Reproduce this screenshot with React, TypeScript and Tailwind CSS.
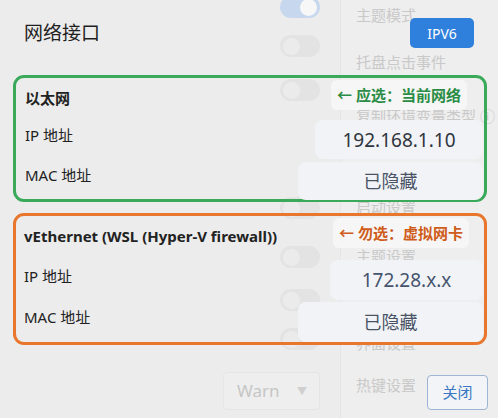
const Toggle = ({ on = false, className = "" }: { on?: boolean; className?: string }) => (
  <div
    className={`w-[40px] h-[22px] rounded-full flex items-center px-[3px] ${
      on ? "bg-[#c6d7ee] justify-end" : "bg-[#e3e3e3] justify-start"
    } ${className}`}
  >
    <div className={`w-[17px] h-[17px] rounded-full ${on ? "bg-[#f7f7f7]" : "bg-[#ebebeb]"}`} />
  </div>
);

const Pill = ({ children, className = "" }: { children: React.ReactNode; className?: string }) => (
  <div
    className={`bg-[#f1f3f6] rounded-[8px] flex items-center justify-center text-[18px] ${className}`}
  >
    {children}
  </div>
);

const Background = () => (
  <div className="flex h-full">
    <div className="w-[340px] flex flex-col items-end pr-[20px]">
      <Toggle on className="-mt-[4px]" />
      <Toggle className="mt-[17px]" />
      <Toggle className="mt-[22px]" />
      <Toggle className="mt-[96px]" />
      <Toggle className="mt-[27px]" />
      <Toggle className="mt-[21px]" />
      <Toggle className="mt-[17px]" />
      <div className="mt-[22px] w-[97px] h-[38px] border border-[#e5e5e5] rounded-[4px] bg-[#eeeeee] flex items-center justify-between pl-[13px] pr-[12px] text-[17px] text-[#c6c6c6]">
        <span>Warn</span>
        <span className="text-[10px] text-[#cfcfcf]">▼</span>
      </div>
    </div>
    <div className="flex-1 border-l border-[#e5e5e5] bg-[#eeeeee] pl-[15px] flex flex-col text-[15px] leading-[20px] text-[#c9c9c9]">
      <span className="mt-[5px]">主题模式</span>
      <span className="mt-[27px]">托盘点击事件</span>
      <span className="mt-[37px] leading-[14px] whitespace-nowrap">复制环境变量类型 ⓘ</span>
      <span className="mt-[74px]">启动设置</span>
      <span className="mt-[32px] leading-[14px]">主题设置</span>
      <span className="mt-[70px]">界面设置</span>
      <span className="mt-[22px]">热键设置</span>
    </div>
  </div>
);

export default function App() {
  return (
    <div className="relative w-[498px] h-[418px] bg-[#ececec] overflow-hidden font-['Noto_Sans','Noto_Sans_CJK_SC',sans-serif]">
      <Background />

      <div className="absolute inset-0 flex flex-col pl-[13px] pr-[11px] pt-[18px] text-[#222]">
        <div className="flex items-center justify-between h-[30px] pl-[11px] pr-[13px]">
          <span className="text-[19px] text-[#1f1f1f]">网络接口</span>
          <button className="w-[64px] h-[30px] rounded-[5px] bg-[#2f7fdc] text-white text-[14px]">
            IPV6
          </button>
        </div>

        <div className="mt-[27px] h-[127px] border-[3px] border-[#3aa95a] rounded-[11px] flex flex-col pl-[9px] pr-[1px] text-[15px] leading-[20px]">
          <div className="h-[40px] flex items-start justify-between">
            <span className="mt-[10px] font-bold">以太网</span>
            <div className="mt-[2px] mr-[16px] h-[30px] px-[6px] rounded-[6px] bg-[#f6f6f6] flex items-center text-[15px] font-bold text-[#2b8c45] whitespace-nowrap">
              ← 应选：当前网络
            </div>
          </div>
          <div className="flex items-start justify-between mt-[10px]">
            <span className="mt-[5px]">IP 地址</span>
            <Pill className="w-[168px] h-[39px] text-[19px] text-[#2f3540]">192.168.1.10</Pill>
          </div>
          <div className="flex items-start justify-between mt-[3px]">
            <span className="mt-[3px]">MAC 地址</span>
            <Pill className="w-[185px] h-[38px] text-[#4a5366]">已隐藏</Pill>
          </div>
        </div>

        <div className="mt-[11px] h-[132px] border-[3px] border-[#e8762c] rounded-[11px] flex flex-col pl-[8px] pr-[1px] text-[15px] leading-[20px]">
          <div className="h-[40px] flex items-start justify-between">
            <span className="mt-[10px] font-bold whitespace-nowrap">vEthernet (WSL (Hyper-V firewall))</span>
            <div className="mt-[2px] mr-[14px] h-[30px] px-[6px] rounded-[6px] bg-[#f6f6f6] flex items-center text-[15px] font-bold text-[#cf5c1a] whitespace-nowrap">
              ← 勿选：虚拟网卡
            </div>
          </div>
          <div className="flex items-start justify-between mt-[7px]">
            <span className="mt-[6px]">IP 地址</span>
            <Pill className="w-[153px] h-[40px] text-[19px] text-[#45536e]">172.28.x.x</Pill>
          </div>
          <div className="flex items-start justify-between mt-[2px]">
            <span className="mt-[5px]">MAC 地址</span>
            <Pill className="w-[185px] h-[40px] text-[#4a5366]">已隐藏</Pill>
          </div>
        </div>

        <div className="flex justify-end mt-[30px] -mr-[1px]">
          <button className="w-[61px] h-[35px] rounded-[4px] border border-[#9db4d4] bg-[#f2f4f7] text-[15px] text-[#3a77c3]">
            关闭
          </button>
        </div>
      </div>
    </div>
  );
}
